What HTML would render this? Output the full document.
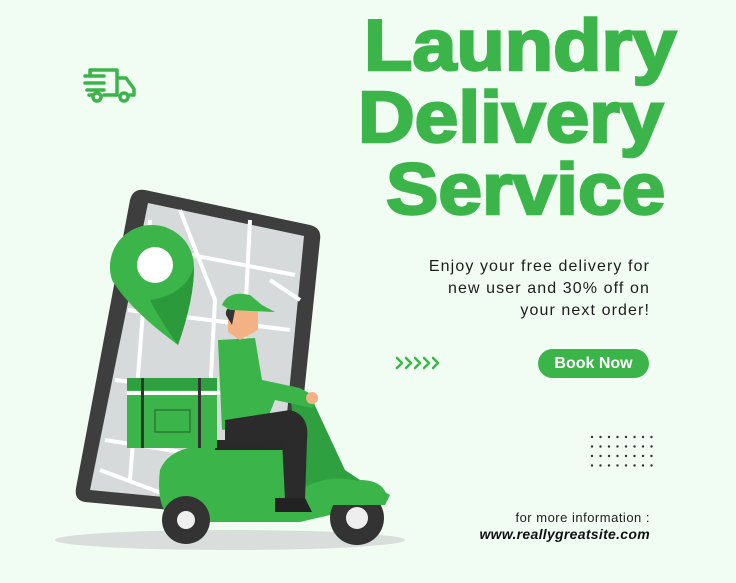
<!DOCTYPE html>
<html><head><meta charset="utf-8"><style>
html,body{margin:0;padding:0}
body{width:736px;height:583px;background:#f1fcf3;position:relative;overflow:hidden;font-family:"Liberation Sans",sans-serif}
.t{position:absolute;color:#3bb54a;font-weight:bold;font-size:72px;line-height:72px;white-space:nowrap;letter-spacing:0px;-webkit-text-stroke:2.5px #3bb54a}
.p{position:absolute;right:86px;text-align:right;font-size:16px;line-height:22px;color:#1d1d1d;letter-spacing:1.1px;top:256px}
.btn{position:absolute;left:538px;top:349px;width:111px;height:29px;border-radius:15px;background:#3bb54a;color:#fff;font-weight:bold;font-size:16px;line-height:29px;text-align:center}
.f1{position:absolute;right:86px;top:510px;font-size:13px;color:#222;letter-spacing:.5px}
.f2{position:absolute;right:86px;top:526px;font-size:14px;color:#111;font-weight:bold;font-style:italic;letter-spacing:.3px}
</style></head><body>
<div class="t" style="left:364px;top:10px;transform:scaleX(1.1);transform-origin:left">Laundry</div>
<div class="t" style="left:358px;top:82px;transform:scaleX(1.09);transform-origin:left">Delivery</div>
<div class="t" style="left:386px;top:154px;transform:scaleX(1.09);transform-origin:left">Service</div>
<div class="p">Enjoy your free delivery for<br>new user and 30% off on<br>your next order!</div>
<div class="btn">Book Now</div>
<div class="f1">for more information :</div>
<div class="f2">www.reallygreatsite.com</div>
<svg width="736" height="583" style="position:absolute;left:0;top:0">
<g fill="none" stroke="#3bb54a" stroke-width="2.5" stroke-linecap="round" stroke-linejoin="round">
<path d="M397 358 L402 363 L397 368 M406 358 L411 363 L406 368 M415 358 L420 363 L415 368 M424 358 L429 363 L424 368 M433 358 L438 363 L433 368"/>
</g>
<g fill="#333"><g id="r">
<circle cx="592" cy="437" r="1.2"/><circle cx="600.5" cy="437" r="1.2"/><circle cx="609" cy="437" r="1.2"/><circle cx="617.5" cy="437" r="1.2"/><circle cx="626" cy="437" r="1.2"/><circle cx="634.5" cy="437" r="1.2"/><circle cx="643" cy="437" r="1.2"/><circle cx="651.5" cy="437" r="1.2"/></g>
<use href="#r" y="9.5"/><use href="#r" y="19"/><use href="#r" y="28.5"/></g>
<!-- truck icon -->
<g fill="none" stroke="#3bb54a" stroke-width="3.5" stroke-linecap="round" stroke-linejoin="round">
<path d="M90 70 H117 V95 H104 M117 78 H126 L134 89 V95 H130 M93 95 H89 M90 70 V74"/>
<path d="M85 76 H104 M85 83 H104 M87 90 H104"/>
<circle cx="97" cy="97" r="4"/><circle cx="124" cy="97" r="4"/>
</g>
<ellipse cx="230" cy="540" rx="175" ry="10" fill="#d9dddb"/>
<path d="M145 190 L310 225 Q322 228 320 240 L292 510 Q290 522 278 520 L85 502 Q74 500 76 488 L130 200 Q133 188 145 190Z" fill="#3e3e3e"/>
<path d="M148 203 L304 236 L278 508 L90 490Z" fill="#d6dadb"/>
<g stroke="#fff" stroke-width="4" fill="none">
<path d="M140 245 L295 275 M128 310 L290 330 M115 380 L240 395 M105 440 L200 455 M180 210 L215 300 L205 490 M250 220 L240 420 M150 220 L130 480 M270 280 L300 300 M100 470 L180 500"/>
</g>
<path d="M152 225 A42 42 0 0 1 194 267 Q194 300 178 345 Q130 310 112 280 A42 42 0 0 1 152 225Z" fill="#3bb54a"/>
<path d="M194 267 Q194 300 178 345 Q160 320 150 300 Q185 295 194 267Z" fill="#2a9a3a"/>
<circle cx="155" cy="265" r="18" fill="#fff"/>
<path d="M160 470 Q170 445 215 445 L285 445 Q300 470 300 495 L360 480 Q385 480 388 500 L330 515 L300 522 L175 522 Q155 510 160 470Z" fill="#3bb54a"/>
<path d="M290 390 L310 395 L345 470 L360 480 L330 500 L300 495Z" fill="#2fa03f"/>
<path d="M215 440 L290 440 L290 450 L215 450Z" fill="#2a2a2a"/>
<circle cx="186" cy="520" r="24" fill="#333"/><circle cx="186" cy="520" r="9" fill="#eee"/>
<circle cx="357" cy="518" r="27" fill="#333"/><circle cx="357" cy="518" r="11" fill="#eee"/>
<path d="M300 490 Q340 465 390 495 L385 505 L300 505Z" fill="#3bb54a"/>
<rect x="127" y="378" width="90" height="70" fill="#3bb54a"/>
<rect x="127" y="378" width="90" height="12" fill="#2fa03f"/>
<rect x="127" y="391" width="90" height="4" fill="#fff"/>
<rect x="155" y="410" width="35" height="22" fill="none" stroke="#2a7a33" stroke-width="1.5"/>
<rect x="141" y="378" width="3" height="70" fill="#333"/><rect x="198" y="378" width="3" height="70" fill="#333"/>
<path d="M218 340 L255 338 L262 380 L300 388 L318 398 L312 408 L275 400 L265 425 L222 430Z" fill="#3bb54a"/>
<path d="M225 420 L290 410 Q310 415 307 440 L305 500 L285 500 L282 440 L225 445Z" fill="#2b2b2b"/>
<path d="M275 498 L305 498 L312 512 L275 512Z" fill="#222"/>
<path d="M228 310 Q230 300 250 305 L258 312 L258 330 L240 340 L228 332Z" fill="#f4b183"/>
<path d="M226 315 Q225 305 235 310 L232 325 Z" fill="#333"/>
<path d="M222 305 Q228 290 250 295 L262 305 L275 312 L230 310Z" fill="#3bb54a"/>
<circle cx="312" cy="398" r="6" fill="#f4b183"/>
</svg>
</body></html>
